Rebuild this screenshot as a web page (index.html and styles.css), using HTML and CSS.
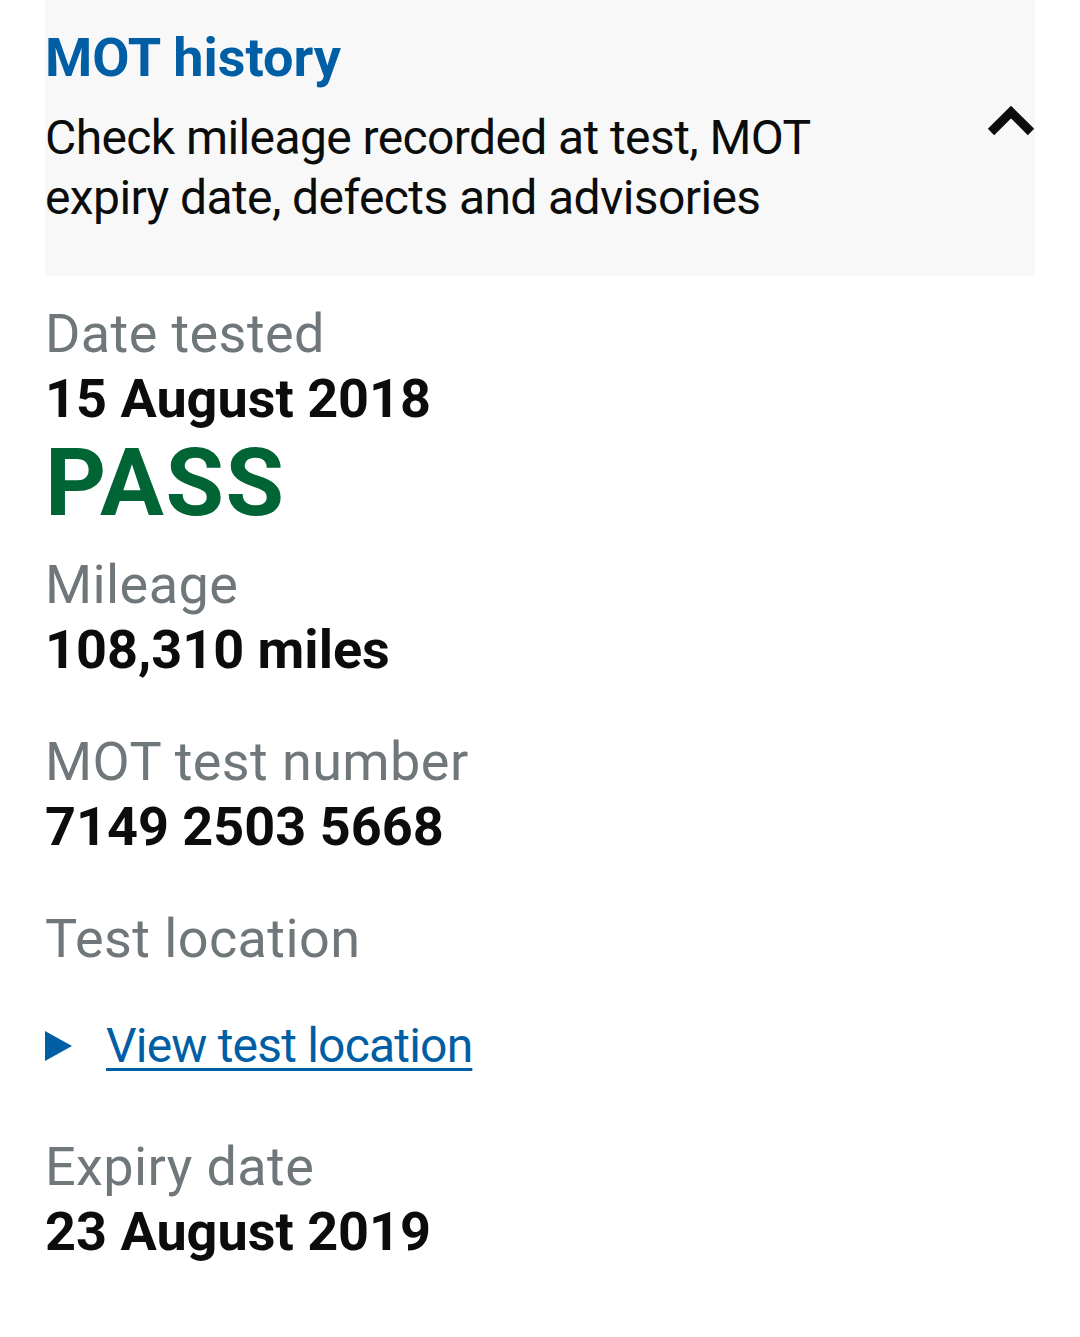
FILE: index.html
```html
<!DOCTYPE html>
<html lang="en">
<head>
  <meta charset="UTF-8">
  <meta name="viewport" content="width=device-width, initial-scale=1.0">
  <title>MOT history</title>
  <link rel="stylesheet" href="styles.css">
</head>
<body>
  <main class="page">
    <section class="accordion">
      <div class="accordion-header">
        <h2 class="accordion-title">MOT history</h2>
        <div class="accordion-row">
          <p class="accordion-summary">Check mileage recorded at test, MOT expiry date, defects and advisories</p>
          <svg class="chevron" viewBox="0 0 48 31" aria-hidden="true">
            <polyline points="4,27 24,7 44,27" fill="none" stroke="#0b0c0c" stroke-width="9" stroke-linejoin="miter" stroke-linecap="butt"/>
          </svg>
        </div>
      </div>

      <dl class="result">
        <div class="result-group result-group--status">
          <dt>Date tested</dt>
          <dd class="value">15 August 2018</dd>
          <dd class="status status--pass">PASS</dd>
        </div>
        <div class="result-group">
          <dt>Mileage</dt>
          <dd class="value">108,310 miles</dd>
        </div>
        <div class="result-group">
          <dt>MOT test number</dt>
          <dd class="value">7149 2503 5668</dd>
        </div>
        <div class="result-group result-group--location">
          <dt>Test location</dt>
          <dd>
            <details class="details">
              <summary class="details-summary"><span class="details-text">View test location</span></summary>
            </details>
          </dd>
        </div>
        <div class="result-group">
          <dt>Expiry date</dt>
          <dd class="value">23 August 2019</dd>
        </div>
      </dl>
    </section>
  </main>
</body>
</html>
```

FILE: styles.css
```css
body {
  margin: 0;
  background: #fff;
  color: #0b0c0c;
  font-family: Roboto, "Noto Sans", Arial, sans-serif;
}
.page {
  padding: 0 45px;
}

/* accordion header */
.accordion-header {
  background: #f8f8f8;
  padding: 28px 0 48px;
}
.accordion-title {
  margin: 0;
  font-size: 54px;
  line-height: 60px;
  font-weight: 700;
  color: #005ea5;
}
.accordion-row {
  display: flex;
  justify-content: space-between;
  align-items: flex-start;
  margin-top: 20px;
}
.accordion-summary {
  margin: 0;
  max-width: 880px;
  font-size: 48px;
  line-height: 60px;
  letter-spacing: -0.6px;
}
.chevron {
  flex-shrink: 0;
  width: 48px;
  height: 31px;
  margin-top: -3px;
}

/* test result list */
.result {
  margin: 25px 0 0;
}
.result dd {
  margin: 0;
}
.result-group {
  margin-bottom: 47px;
}
.result-group dt {
  font-size: 54px;
  line-height: 65px;
  color: #6f777b;
  letter-spacing: 0.4px;
}
.value {
  font-size: 54px;
  line-height: 65px;
  font-weight: 700;
}
.status {
  font-size: 95px;
  line-height: 103px;
  font-weight: 700;
  letter-spacing: 1.5px;
}
.status--pass {
  color: #006435;
}
.result-group--status {
  margin-bottom: 18px;
}
.result-group--location {
  margin-bottom: 58px;
}

/* details toggle */
.details {
  margin-top: 45px;
}
.details-summary {
  display: flex;
  align-items: center;
  gap: 34px;
  list-style: none;
  cursor: pointer;
}
.details-summary::-webkit-details-marker {
  display: none;
}
.details-summary::before {
  content: "";
  width: 0;
  height: 0;
  border-left: 27px solid #005ea5;
  border-top: 15.5px solid transparent;
  border-bottom: 15.5px solid transparent;
}
.details-text {
  font-size: 48px;
  line-height: 60px;
  color: #005ea5;
  letter-spacing: -0.8px;
  text-decoration: underline;
  text-decoration-thickness: 3px;
  text-underline-offset: 6px;
}
```
